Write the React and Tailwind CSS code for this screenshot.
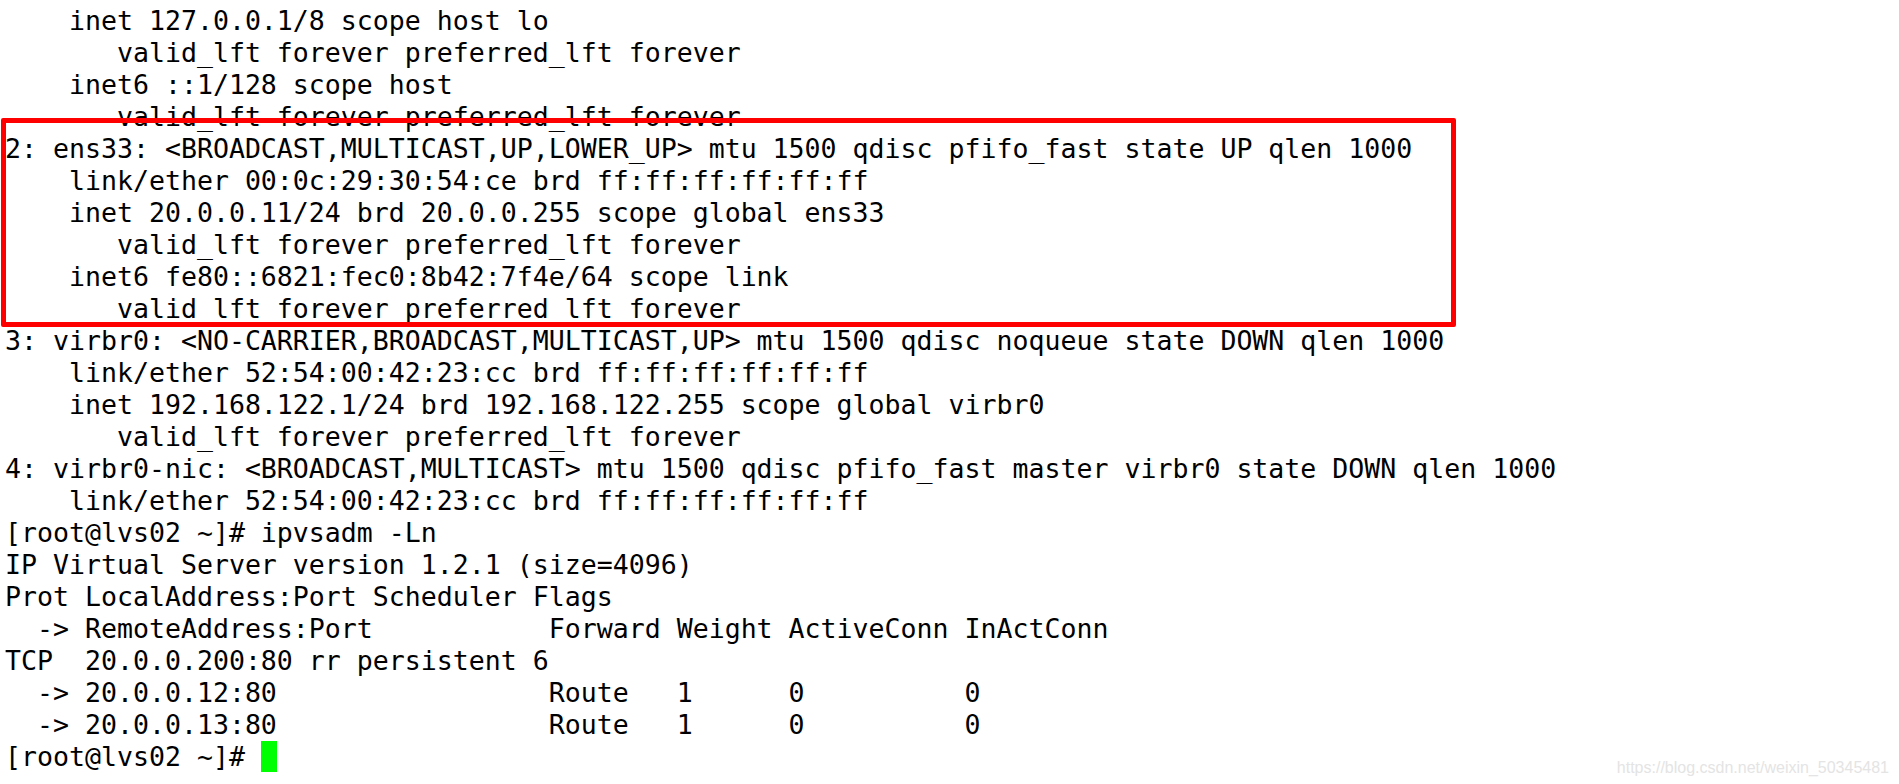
import React from 'react';

const lines = [
  '    inet 127.0.0.1/8 scope host lo',
  '       valid_lft forever preferred_lft forever',
  '    inet6 ::1/128 scope host',
  '       valid_lft forever preferred_lft forever',
  '2: ens33: <BROADCAST,MULTICAST,UP,LOWER_UP> mtu 1500 qdisc pfifo_fast state UP qlen 1000',
  '    link/ether 00:0c:29:30:54:ce brd ff:ff:ff:ff:ff:ff',
  '    inet 20.0.0.11/24 brd 20.0.0.255 scope global ens33',
  '       valid_lft forever preferred_lft forever',
  '    inet6 fe80::6821:fec0:8b42:7f4e/64 scope link',
  '       valid_lft forever preferred_lft forever',
  '3: virbr0: <NO-CARRIER,BROADCAST,MULTICAST,UP> mtu 1500 qdisc noqueue state DOWN qlen 1000',
  '    link/ether 52:54:00:42:23:cc brd ff:ff:ff:ff:ff:ff',
  '    inet 192.168.122.1/24 brd 192.168.122.255 scope global virbr0',
  '       valid_lft forever preferred_lft forever',
  '4: virbr0-nic: <BROADCAST,MULTICAST> mtu 1500 qdisc pfifo_fast master virbr0 state DOWN qlen 1000',
  '    link/ether 52:54:00:42:23:cc brd ff:ff:ff:ff:ff:ff',
  '[root@lvs02 ~]# ipvsadm -Ln',
  'IP Virtual Server version 1.2.1 (size=4096)',
  'Prot LocalAddress:Port Scheduler Flags',
  '  -> RemoteAddress:Port           Forward Weight ActiveConn InActConn',
  'TCP  20.0.0.200:80 rr persistent 6',
  '  -> 20.0.0.12:80                 Route   1      0          0',
  '  -> 20.0.0.13:80                 Route   1      0          0',
];

export default function App() {
  return (
    <div className="relative h-[784px] w-full overflow-hidden bg-white">
      {/* terminal output */}
      <div className="pl-[5px] pt-[5px] text-[26.57px] leading-[32px] text-black font-['DejaVu_Sans_Mono',monospace]">
        {lines.map((line, i) => (
          <div key={i} className="h-[32px] whitespace-pre">{line}</div>
        ))}
        <div className="flex h-[32px] items-start whitespace-pre">
          <span>[root@lvs02 ~]# </span>
          <span className="mt-0 h-[31px] w-[16px] bg-[#00ff00]"></span>
        </div>
      </div>

      {/* red highlight box */}
      <div className="absolute left-[1px] top-[118px] h-[209px] w-[1455px] rounded-[2px] border-[5px] border-[#ff0000]"></div>

      {/* watermark */}
      <div className="absolute bottom-[6px] right-[10px] text-[16px] leading-[20px] text-[#e4e4e4] font-['Liberation_Sans',Arial,sans-serif]">
        https://blog.csdn.net/weixin_50345481
      </div>
    </div>
  );
}
